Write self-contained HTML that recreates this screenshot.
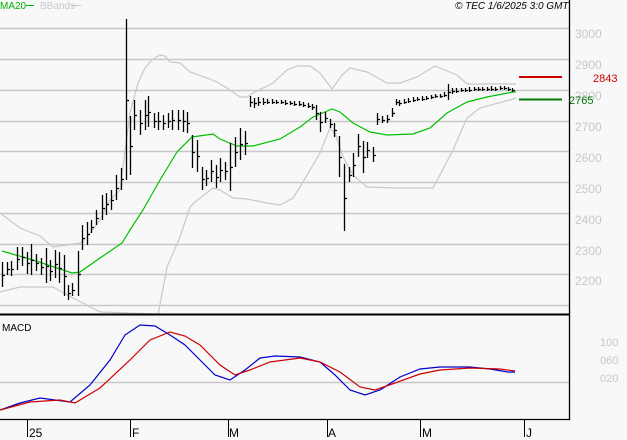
<!DOCTYPE html>
<html><head><meta charset="utf-8"><style>
html,body{margin:0;padding:0;background:#f8f8f8;}
svg{display:block;font-family:"Liberation Sans",sans-serif;}
</style></head><body>
<svg id="s" width="627" height="440" viewBox="0 0 627 440" xmlns="http://www.w3.org/2000/svg">
<rect width="627" height="440" fill="#f8f8f8"/>
<g stroke="#c8c8c8" stroke-width="1.5">
<line x1="0" y1="28.5" x2="569" y2="28.5"/><line x1="0" y1="59.5" x2="569" y2="59.5"/>
<line x1="0" y1="90.5" x2="569" y2="90.5"/><line x1="0" y1="121.5" x2="569" y2="121.5"/>
<line x1="0" y1="151.5" x2="569" y2="151.5"/><line x1="0" y1="182.5" x2="569" y2="182.5"/>
<line x1="0" y1="213.5" x2="569" y2="213.5"/><line x1="0" y1="244.5" x2="569" y2="244.5"/>
<line x1="0" y1="274.5" x2="569" y2="274.5"/><line x1="0" y1="305.5" x2="569" y2="305.5"/>
<line x1="0" y1="382.5" x2="569" y2="382.5"/>
</g>
<g fill="#c8c8c8" font-size="12">
<text x="575" y="38">3000</text><text x="575" y="69">2900</text><text x="575" y="100">2800</text>
<text x="575" y="131">2700</text><text x="575" y="162">2600</text><text x="575" y="193">2500</text>
<text x="575" y="224">2400</text><text x="575" y="255">2300</text><text x="575" y="285">2200</text>
<text x="600" y="346" font-size="11">100</text><text x="600" y="364" font-size="11">060</text><text x="600" y="382" font-size="11">020</text>
</g>
<g fill="none" stroke="#c8c8c8" stroke-width="1.2">
<polyline points="0,213 20,228 40,236 53,247 67,245 80,243 87,237 100,220 110,200 120,190 130,113 138,83 145,68 152,60 160,55 165,56 170,62 180,63 190,72 207,78 217,82 227,88 240,97 247,97 253,93 273,83 287,70 297,66 310,66 320,73 332,89 342,75 350,68 367,72 387,83 400,83 417,77 435,66 457,75 467,84 516,84"/>
<polyline points="0,292 20,287 53,287 73,298 100,312 156,314 158,315 167,267 180,237 190,207 195,202 213,188 220,190 233,198 247,199 267,203 280,205 293,198 300,187 320,153 330,128 335,133 343,157 353,175 367,187 397,188 433,188 453,150 467,118 480,108 513,99 516,98"/>
</g>
<polyline fill="none" stroke="#00c000" stroke-width="1.2" points="2,251 33,260 72,273 80,272 100,258 122,243 130,230 143,210 160,180 177,152 192,137 213,134 220,139 237,146 253,146 280,139 290,133 300,127 313,117 332,109 340,112 353,123 370,132 387,135 413,134 430,128 447,113 467,102 487,97 513,92 516,92"/>
<g id="bars" stroke="#000" stroke-width="1.3" fill="none"></g>
<line x1="519" y1="77" x2="562" y2="77" stroke="#cc0000" stroke-width="2"/>
<line x1="519" y1="99.5" x2="562" y2="99.5" stroke="#007700" stroke-width="2"/>
<text x="593" y="82" fill="#cc0000" font-size="11">2843</text>
<text x="569" y="104" fill="#007700" font-size="11">2765</text>
<line x1="0" y1="314.5" x2="569" y2="314.5" stroke="#000" stroke-width="2"/>
<polyline fill="none" stroke="#0000cc" stroke-width="1.2" points="0,410 20,403 40,398 70,402 90,385 110,360 125,335 140,325 155,326 170,335 185,345 200,360 215,375 230,380 245,370 260,358 275,356 300,357 320,362 335,375 350,390 365,395 380,390 400,377 420,369 440,367 470,367 490,369 508,372 515,372"/>
<polyline fill="none" stroke="#cc0000" stroke-width="1.2" points="0,410 30,402 60,400 75,403 100,388 130,360 150,340 170,332 185,336 200,345 220,365 235,375 250,370 270,362 300,358 320,362 340,372 360,387 375,390 395,383 420,374 440,370 470,368 500,369 515,371"/>
<line x1="569.5" y1="0" x2="569.5" y2="420" stroke="#000" stroke-width="1.3"/>
<line x1="0" y1="419.5" x2="570" y2="419.5" stroke="#000" stroke-width="1.3"/>
<g stroke="#000" stroke-width="1">
<line x1="27.5" y1="419" x2="27.5" y2="437"/><line x1="130.5" y1="419" x2="130.5" y2="437"/>
<line x1="228.5" y1="419" x2="228.5" y2="437"/><line x1="327.5" y1="419" x2="327.5" y2="437"/>
<line x1="420.5" y1="419" x2="420.5" y2="437"/><line x1="524.5" y1="419" x2="524.5" y2="437"/>
</g>
<g font-size="12" fill="#000">
<text x="29" y="437">25</text><text x="132" y="437">F</text><text x="229" y="437">M</text>
<text x="328" y="437">A</text><text x="422" y="437">M</text><text x="526" y="437">J</text>
<text x="2" y="331" font-size="10">MACD</text>
</g>
<text x="0" y="9" font-size="10" fill="#00b000">MA20</text>
<line x1="26" y1="5.5" x2="34" y2="5.5" stroke="#00c000"/>
<text x="40" y="9" font-size="10" fill="#c8c8c8">BBands</text>
<line x1="72" y1="5.5" x2="81" y2="5.5" stroke="#c8c8c8"/>
<text x="455" y="9" font-size="10" font-style="italic" fill="#000">© TEC 1/6/2025 3:0 GMT</text>
<script>
var b=[[2,262,287],[7,262,275],[11,261,276],[17,247,270],[22,247,266],[27,252,274],[31,244,275],[36,254,271],[41,258,275],[46,248,283],[50,260,281],[55,250,278],[59,252,283],[64,255,296],[68,285,300],[72,283,296],[78,251,296],[82,225,250],[87,222,245],[91,220,233],[96,210,225],[102,195,220],[106,193,215],[111,190,210],[116,175,200],[121,168,190],[126,19,180],[130,116,175],[134,100,130],[140,110,135],[145,100,130],[148,96,127],[154,113,128],[158,112,130],[163,115,130],[168,113,128],[172,110,130],[178,110,130],[183,110,132],[187,112,133],[192,135,168],[197,140,172],[202,167,190],[206,170,186],[211,160,182],[216,165,188],[220,158,182],[225,162,180],[230,143,191],[235,137,167],[240,128,160],[245,131,155],
[250,96,107],[254,98,108],[258,97,106],[263,98,105],[267,99,104],[272,99,104],[276,100,104],[281,100,104],[285,100,105],[290,101,105],[294,101,106],[299,101,106],[303,102,107],[308,103,108],[312,104,110],[316,105,120],[320,112,132],[325,112,123],[330,119,128],[334,123,137],[339,136,177],[344,164,231],[349,167,182],[353,153,177],[358,134,157],[363,141,173],[367,142,158],[373,147,162],[377,113,125],[382,116,123],[387,115,123],[392,108,117],[396,99,105],[399,100,106],[404,99,104],[408,98,103],[413,97,102],[417,97,101],[422,96,101],[426,96,100],[431,95,99],[435,94,98],[440,94,98],[444,92,97],[448,84,100],[452,88,94],[456,88,93],[461,88,92],[465,88,92],[469,87,92],[474,87,91],[478,87,91],[482,87,91],[487,87,91],[491,86,91],[495,87,91],[500,86,90],[504,86,90],[508,87,91],[512,88,92]];
var d="";b.forEach(function(a){var m=Math.round((a[1]+a[2])/2);d+="M"+(a[0]+.5)+" "+a[1]+"V"+a[2]+"M"+(a[0]+.5)+" "+(m+.5)+"h2.5";});
var p=document.createElementNS("http://www.w3.org/2000/svg","path");p.setAttribute("d",d);document.getElementById("bars").appendChild(p);
</script>
</svg>
</body></html>
